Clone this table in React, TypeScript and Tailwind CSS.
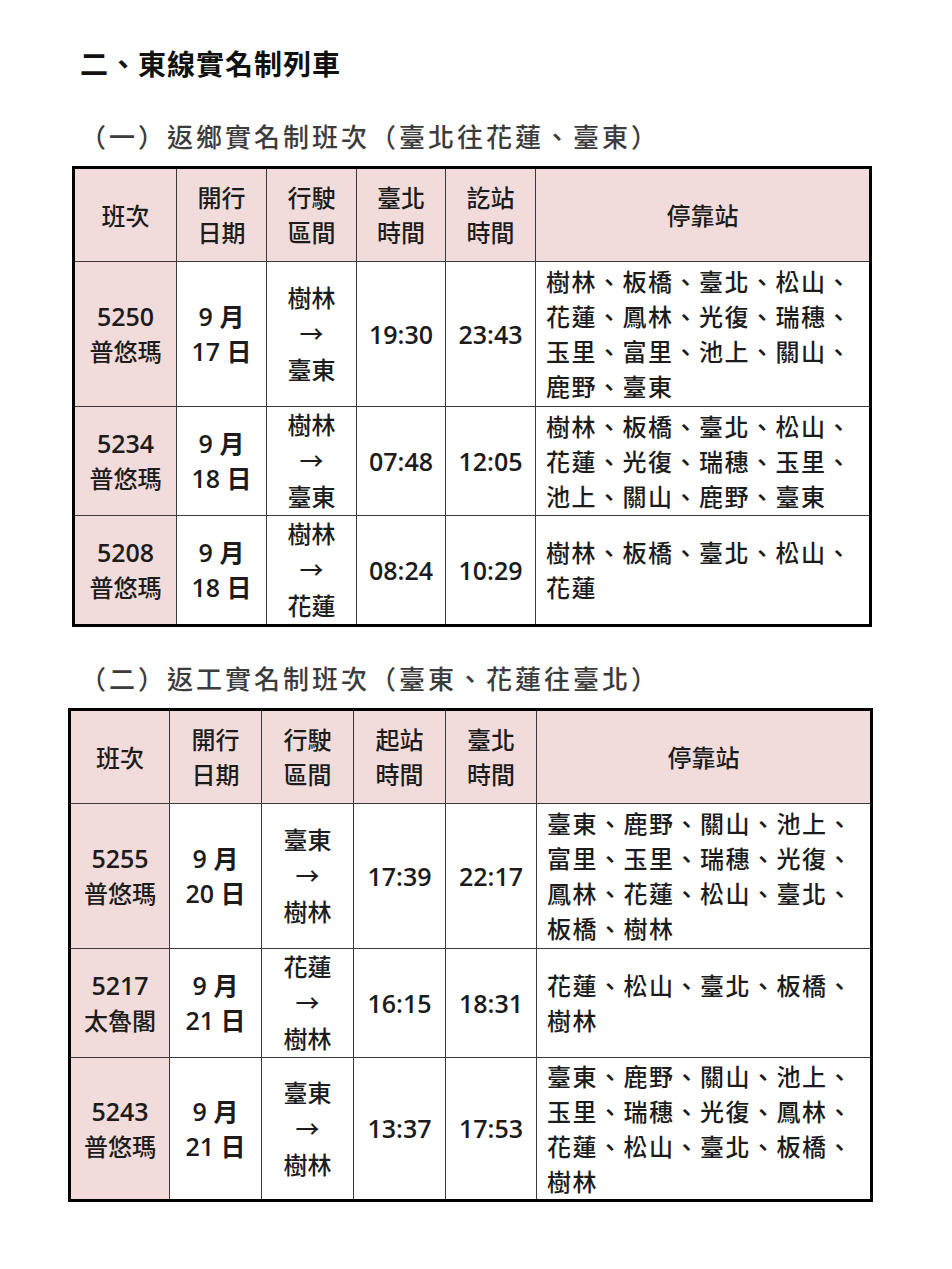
const FONT = { fontFamily: '"Open Sans", "Noto Sans CJK TC", sans-serif' };

type Row = {
  no: string;
  name: string;
  month: string;
  day: string;
  from: string;
  to: string;
  t1: string;
  t2: string;
  stops: string[];
  h: string;
};

const going: Row[] = [
  {
    no: '5250',
    name: '普悠瑪',
    month: '9 月',
    day: '17 日',
    from: '樹林',
    to: '臺東',
    t1: '19:30',
    t2: '23:43',
    stops: ['樹林、板橋、臺北、松山、', '花蓮、鳳林、光復、瑞穗、', '玉里、富里、池上、關山、', '鹿野、臺東'],
    h: 'h-[145px]',
  },
  {
    no: '5234',
    name: '普悠瑪',
    month: '9 月',
    day: '18 日',
    from: '樹林',
    to: '臺東',
    t1: '07:48',
    t2: '12:05',
    stops: ['樹林、板橋、臺北、松山、', '花蓮、光復、瑞穗、玉里、', '池上、關山、鹿野、臺東'],
    h: 'h-[108px]',
  },
  {
    no: '5208',
    name: '普悠瑪',
    month: '9 月',
    day: '18 日',
    from: '樹林',
    to: '花蓮',
    t1: '08:24',
    t2: '10:29',
    stops: ['樹林、板橋、臺北、松山、', '花蓮'],
    h: 'h-[110px]',
  },
];

const returning: Row[] = [
  {
    no: '5255',
    name: '普悠瑪',
    month: '9 月',
    day: '20 日',
    from: '臺東',
    to: '樹林',
    t1: '17:39',
    t2: '22:17',
    stops: ['臺東、鹿野、關山、池上、', '富里、玉里、瑞穗、光復、', '鳳林、花蓮、松山、臺北、', '板橋、樹林'],
    h: 'h-[145px]',
  },
  {
    no: '5217',
    name: '太魯閣',
    month: '9 月',
    day: '21 日',
    from: '花蓮',
    to: '樹林',
    t1: '16:15',
    t2: '18:31',
    stops: ['花蓮、松山、臺北、板橋、', '樹林'],
    h: 'h-[109px]',
  },
  {
    no: '5243',
    name: '普悠瑪',
    month: '9 月',
    day: '21 日',
    from: '臺東',
    to: '樹林',
    t1: '13:37',
    t2: '17:53',
    stops: ['臺東、鹿野、關山、池上、', '玉里、瑞穗、光復、鳳林、', '花蓮、松山、臺北、板橋、', '樹林'],
    h: 'h-[143px]',
  },
];

const cell = 'border border-[#3a3a3a] text-center align-middle p-0';
const pink = 'bg-[#f2dcdb]';

function Schedule({
  rows,
  heads,
  cols,
  width,
  left,
}: {
  rows: Row[];
  heads: [string, string];
  cols: number[];
  width: number;
  left: string;
}) {
  return (
    <table
      className={`table-fixed border-collapse border-[3px] border-black text-[24px] font-medium leading-[35px] text-[#1c1c1c] ${left}`}
      style={{ width }}
    >
      <colgroup>
        {cols.map((w, i) => (
          <col key={i} style={{ width: w }} />
        ))}
        <col />
      </colgroup>
      <thead>
        <tr className={`h-[94px] ${pink}`}>
          <th className={`${cell} font-medium`}>班次</th>
          <th className={`${cell} font-medium`}>
            開行
            <br />
            日期
          </th>
          <th className={`${cell} font-medium`}>
            行駛
            <br />
            區間
          </th>
          <th className={`${cell} font-medium`}>
            {heads[0]}
            <br />
            時間
          </th>
          <th className={`${cell} font-medium`}>
            {heads[1]}
            <br />
            時間
          </th>
          <th className={`${cell} font-medium`}>停靠站</th>
        </tr>
      </thead>
      <tbody>
        {rows.map((r) => (
          <tr key={r.no} className={r.h}>
            <td className={`${cell} ${pink}`}>
              <div className="text-[25px] font-semibold">{r.no}</div>
              <div>{r.name}</div>
            </td>
            <td className={`${cell} text-[25px] font-semibold`}>
              <div>{r.month}</div>
              <div>{r.day}</div>
            </td>
            <td className={`${cell} leading-[36px]`}>
              <div>{r.from}</div>
              <div>→</div>
              <div>{r.to}</div>
            </td>
            <td className={`${cell} text-[25px] font-semibold`}>{r.t1}</td>
            <td className={`${cell} text-[25px] font-semibold`}>{r.t2}</td>
            <td className={`${cell} text-left pl-[10px] tracking-[1.5px]`}>
              {r.stops.map((s, i) => (
                <div key={i}>{s}</div>
              ))}
            </td>
          </tr>
        ))}
      </tbody>
    </table>
  );
}

export default function App() {
  return (
    <div className="min-h-[1269px] w-[952px] bg-white pt-[46px]" style={FONT}>
      <h1 className="ml-[80px] text-[28px] font-bold leading-[36px] tracking-[1px] text-[#111]">
        二、東線實名制列車
      </h1>
      <h2 className="ml-[80px] mt-[37px] text-[26px] font-medium leading-[36px] tracking-[3px] text-[#3c3c3c]">
        （一）返鄉實名制班次（臺北往花蓮、臺東）
      </h2>
      <div className="mt-[11px]">
        <Schedule
          rows={going}
          heads={['臺北', '訖站']}
          cols={[103, 90, 90, 89, 90]}
          width={800}
          left="ml-[72px]"
        />
      </div>
      <h2 className="ml-[80px] mt-[34px] text-[26px] font-medium leading-[36px] tracking-[3px] text-[#3c3c3c]">
        （二）返工實名制班次（臺東、花蓮往臺北）
      </h2>
      <div className="mt-[11px]">
        <Schedule
          rows={returning}
          heads={['起站', '臺北']}
          cols={[100, 92, 92, 92, 91]}
          width={805}
          left="ml-[68px]"
        />
      </div>
    </div>
  );
}
